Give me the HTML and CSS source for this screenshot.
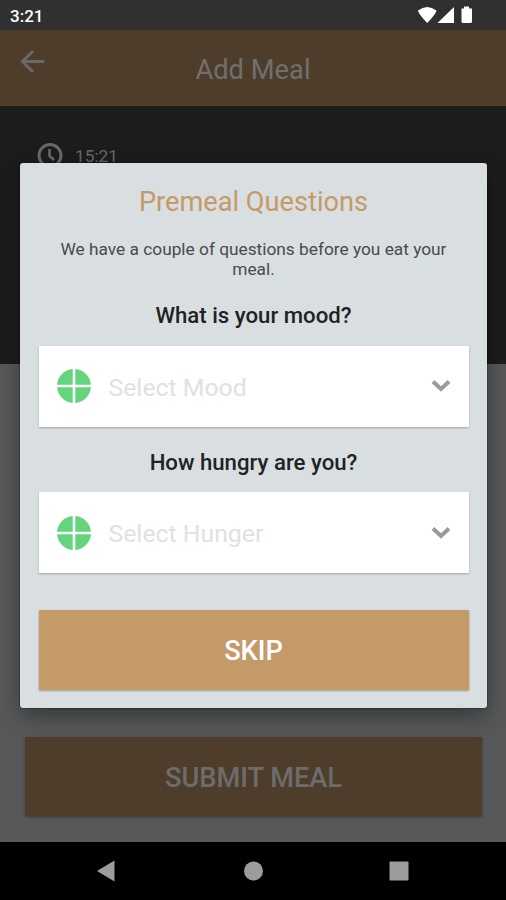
FILE: index.html
```
<!doctype html>
<html lang="en">
  <head>
    <meta charset="utf-8">
    <title>Add Meal</title>
    <link rel="stylesheet" href="styles.css">
  </head>
  <body>
    <div class="status-bar">
      <span>3:21</span>
      <svg width="60" height="20" viewBox="0 0 60 20" fill="#fff">
        <path d="M1 5.5Q10.200 -1.500 19.500 5.500Q19 9 10.200 18Q1.500 9 1 5.500Z"/>
        <path d="M37 2V18H20.500Z"/>
        <path d="M44.500 3.500H47V1.500H52V3.500H55V16.500Q55 18 53.500 18H46Q44.500 18 44.500 16.500Z"/>
      </svg>
    </div>
    <header class="header">
      <svg class="back" width="26" height="26" viewBox="0 0 26 26" fill="none" stroke="#6b6966" stroke-width="3">
        <path d="M24.500 12.500H3M13 2L2.500 12.500L13 23"/>
      </svg>
      <h1>Add Meal</h1>
    </header>
    <div class="meal-time">
      <svg width="26" height="26" viewBox="0 0 26 26" fill="none" stroke="#686868" stroke-width="3">
        <circle cx="13" cy="13.500" r="11"/>
        <path d="M12.500 7V14L17 18" stroke-width="2.500"/>
      </svg>
      <span>15:21</span>
    </div>
    <main class="content">
      <button class="btn submit">SUBMIT MEAL</button>
    </main>
    <nav class="nav-bar">
      <svg width="20" height="22" viewBox="0 0 20 22"><path d="M1 11L18.500 .5V21.500Z"/></svg>
      <svg width="20" height="22" viewBox="0 0 20 22"><circle cx="10.500" cy="11" r="9.500"/></svg>
      <svg width="20" height="22" viewBox="0 0 20 22"><rect x=".5" y="1.500" width="19" height="19" rx="1"/></svg>
    </nav>

    <div class="dialog">
      <h2>Premeal Questions</h2>
      <p>We have a couple of questions before you eat your meal.</p>
      <h3>What is your mood?</h3>
      <div class="select">
        <svg width="34" height="34" viewBox="0 0 34 34">
          <circle cx="17" cy="17" r="17" fill="#64d57d"/>
          <path d="M17 0V34M0 17H34" stroke="#fff" stroke-width="2.600"/>
        </svg>
        <span>Select Mood</span>
        <svg width="20" height="14" viewBox="0 0 20 14" fill="none" stroke="#9b9b9b" stroke-width="4"><path d="M2 2.500L10 10L18 2.500"/></svg>
      </div>
      <h3>How hungry are you?</h3>
      <div class="select">
        <svg width="34" height="34" viewBox="0 0 34 34">
          <circle cx="17" cy="17" r="17" fill="#64d57d"/>
          <path d="M17 0V34M0 17H34" stroke="#fff" stroke-width="2.600"/>
        </svg>
        <span>Select Hunger</span>
        <svg width="20" height="14" viewBox="0 0 20 14" fill="none" stroke="#9b9b9b" stroke-width="4"><path d="M2 2.500L10 10L18 2.500"/></svg>
      </div>
      <button class="btn skip">SKIP</button>
    </div>
  </body>
</html>
```
FILE: styles.css
```
* { margin: 0; padding: 0; box-sizing: border-box; }

body {
  display: flex;
  flex-direction: column;
  position: relative;
  height: 900px;
  overflow: hidden;
  background: #565859;
  font-family: Roboto, sans-serif;
}

.status-bar {
  display: flex;
  justify-content: space-between;
  height: 30px;
  padding: 5px 29px 0 10px;
  background: #303030;
  color: #fff;
  font-size: 17px;
  font-weight: 500;
  line-height: 22px;
}

.header {
  display: grid;
  grid-template-columns: 53px 1fr 53px;
  height: 76px;
  padding-top: 19px;
  background: #4e3d2b;
}

.header .back { margin-left: 20px; }

.header h1 {
  color: #71706f;
  font-size: 27.3px;
  font-weight: 400;
  line-height: 42px;
  text-align: center;
}

.meal-time {
  display: flex;
  gap: 12px;
  height: 258px;
  padding: 36px 37px;
  background: #1c1c1c;
  color: #686868;
  font-size: 17.3px;
  line-height: 28px;
}

.content {
  display: flex;
  flex: 1;
  align-items: flex-end;
  padding: 0 24px 26px 25px;
}

.btn {
  display: block;
  width: 100%;
  height: 80px;
  padding-top: 1px;
  border: 0;
  font: 500 27.2px/80px Roboto, sans-serif;
  text-align: center;
}

.submit {
  height: 79px;
  background: #4e3d2b;
  color: #6d6c6b;
  box-shadow: 0 1px 3px rgba(0, 0, 0, .35);
}

.nav-bar {
  display: flex;
  justify-content: space-between;
  height: 58px;
  padding: 18px 97px 0 96px;
  background: #000;
  fill: #9c9c9c;
}

/* Modal */
.dialog {
  position: absolute;
  top: 163px;
  left: 20px;
  width: 467px;
  height: 545px;
  padding: 21px 18.5px 0;
  border-radius: 3px;
  background: #d9dee0;
  box-shadow: 0 0 2px rgba(0, 0, 0, .7), 0 9px 22px rgba(0, 0, 0, .35);
  text-align: center;
}

.dialog h2 {
  color: #c69968;
  font-size: 27.2px;
  font-weight: 400;
  line-height: 36px;
}

.dialog p {
  margin-top: 19px;
  padding: 0 15px;
  color: #484b4d;
  font-size: 17.3px;
  line-height: 20px;
}

.dialog h3 {
  height: 65.8px;
  padding-top: 21px;
  color: #202224;
  font-size: 22.2px;
  font-weight: 500;
  line-height: 28px;
}

.dialog p + h3 { height: 67.2px; padding-top: 22px; }

.select {
  display: flex;
  align-items: center;
  height: 80.5px;
  padding: 0 18px;
  background: #fff;
  box-shadow: 0 1px 2px rgba(0, 0, 0, .25);
}

.select span {
  flex: 1;
  margin-left: 18px;
  padding-top: 2px;
  color: #e0e1e3;
  font-size: 24.8px;
  text-align: left;
}

.skip {
  margin-top: 36.8px;
  background: #c49a69;
  color: #fff;
  box-shadow: 0 1px 2px rgba(0, 0, 0, .3);
}
```
